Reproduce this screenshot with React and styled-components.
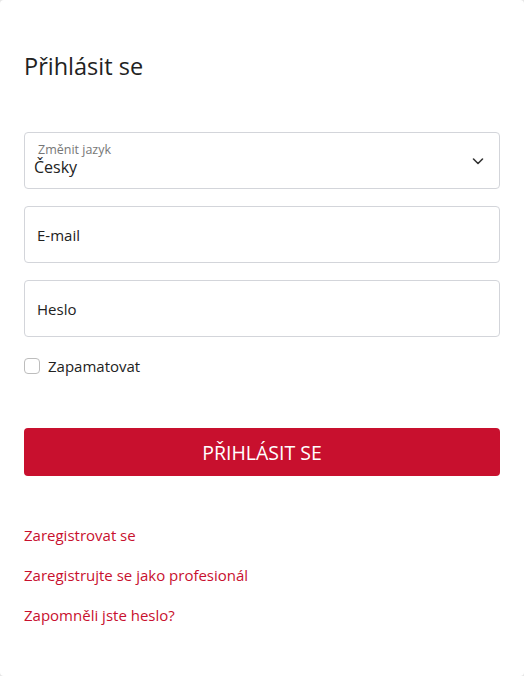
import React from "react";
import styled, { createGlobalStyle } from "styled-components";

const Global = createGlobalStyle`
  html, body { margin: 0; padding: 0; background: #e6e6e6; }
  body { font-family: "Open Sans", Lato, Arial, sans-serif; }
  * { box-sizing: border-box; }
`;

const Card = styled.div`
  width: 524px;
  height: 676px;
  background: #fff;
  border-radius: 4px;
  padding: 51px 24px 0 24px;
  display: flex;
  flex-direction: column;
`;

const Title = styled.h1`
  margin: 0;
  font-size: 23.5px;
  font-weight: 500;
  color: #222;
  line-height: 31px;
`;

const Form = styled.div`
  margin-top: 50px;
  display: flex;
  flex-direction: column;
  gap: 17px;
`;

const Field = styled.div`
  position: relative;
  height: 57px;
  border: 1px solid #d3d5da;
  border-radius: 4px;
  display: flex;
  flex-direction: column;
  justify-content: center;
  padding: 0 12px;
`;

const SmallLabel = styled.span`
  font-size: 12.5px;
  color: #777;
  line-height: 14px;
  padding-left: 1px;
`;

const Value = styled.span`
  font-size: 16px;
  color: #222;
  line-height: 21px;
  margin-left: -3px;
`;

const Placeholder = styled.span`
  font-size: 15px;
  color: #222;
  line-height: 20px;
`;

const Chevron = styled.svg`
  position: absolute;
  right: 14px;
  top: 50%;
  transform: translateY(-50%);
`;

const CheckRow = styled.label`
  display: flex;
  align-items: center;
  gap: 8px;
  margin-top: 2px;
  font-size: 15px;
  color: #222;
`;

const Box = styled.span`
  width: 16px;
  height: 16px;
  border: 1px solid #bdbdbd;
  border-radius: 4px;
  background: #fff;
`;

const Button = styled.button`
  margin-top: 52px;
  height: 48px;
  width: 100%;
  border: none;
  border-radius: 4px;
  background: #c8102e;
  color: #fff;
  font-family: inherit;
  font-size: 19.5px;
  cursor: pointer;
`;

const Links = styled.div`
  margin-top: 49px;
  display: flex;
  flex-direction: column;
  gap: 20px;
`;

const Link = styled.a`
  color: #c8102e;
  font-size: 15px;
  line-height: 20px;
  text-decoration: none;
`;

export default function App() {
  return (
    <>
      <Global />
      <Card>
        <Title>Přihlásit se</Title>
        <Form>
          <Field>
            <SmallLabel>Změnit jazyk</SmallLabel>
            <Value>Česky</Value>
            <Chevron width="14" height="14" viewBox="0 0 14 14">
              <path d="M2.5 5 L7 9.5 L11.5 5" fill="none" stroke="#333" strokeWidth="1.6" strokeLinecap="round" strokeLinejoin="round" />
            </Chevron>
          </Field>
          <Field>
            <Placeholder>E-mail</Placeholder>
          </Field>
          <Field>
            <Placeholder>Heslo</Placeholder>
          </Field>
          <CheckRow>
            <Box />
            Zapamatovat
          </CheckRow>
        </Form>
        <Button>PŘIHLÁSIT SE</Button>
        <Links>
          <Link href="#">Zaregistrovat se</Link>
          <Link href="#">Zaregistrujte se jako profesionál</Link>
          <Link href="#">Zapomněli jste heslo?</Link>
        </Links>
      </Card>
    </>
  );
}
